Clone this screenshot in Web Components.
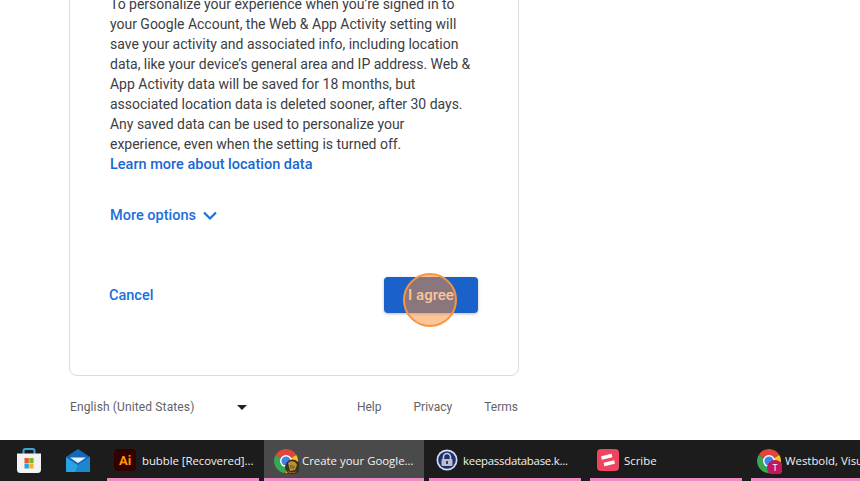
<!DOCTYPE html>
<html>
<head>
<meta charset="utf-8">
<title>Create your Google Account</title>
<style>
html, body { margin: 0; height: 481px; overflow: hidden; background: #fff; }
body { display: flex; flex-direction: column; font-family: Roboto, "Liberation Sans", sans-serif; }
</style>
</head>
<body>
<signup-page>
	<consent-card>
		<p-text>To personalize your experience when you’re signed in to your Google Account, the Web &amp; App Activity setting will save your activity and associated info, including location data, like your device’s general area and IP address. Web &amp; App Activity data will be saved for 18 months, but associated location data is deleted sooner, after 30 days. Any saved data can be used to personalize your experience, even when the setting is turned off.</p-text>
	</consent-card>
	<page-footer></page-footer>
</signup-page>
<task-bar>
	<task-icon kind="store"></task-icon>
	<task-icon kind="mail"></task-icon>
	<task-item kind="ai" label="bubble [Recovered]..."></task-item>
	<task-item kind="chrome" label="Create your Google..." active></task-item>
	<task-item kind="keepass" label="keepassdatabase.k..."></task-item>
	<task-item kind="scribe" label="Scribe"></task-item>
	<task-item kind="chrome2" label="Westbold, Visual Studio"></task-item>
</task-bar>

<script>
class PText extends HTMLElement {
	constructor() {
		super();
		this.attachShadow({ mode: "open" }).innerHTML = `<style>
:host { display: block; font: 14px/20px Roboto, sans-serif; color: #3c4043; letter-spacing: -.015px; }
</style><slot></slot>`;
	}
}
customElements.define("p-text", PText);

class ConsentCard extends HTMLElement {
	constructor() {
		super();
		this.attachShadow({ mode: "open" }).innerHTML = `<style>
:host { display: block; box-sizing: border-box; width: 450px; margin-left: 69px; padding: 40px 40px 62px 40px; border: 1px solid #dadce0; border-radius: 8px; flex: none; position: relative; }
.link { display: block; height: 20px; color: #1967d2; font: 500 14.5px/22px Roboto, sans-serif; }
.more { display: flex; align-items: center; gap: 6px; margin-top: 32px; height: 20px; color: #1a6fdc; font: 500 14.5px/20px Roboto, sans-serif; }
.more svg { display: block; }
.actions { display: flex; justify-content: space-between; align-items: center; margin-top: 51px; }
.cancel { color: #1a6fdc; font: 500 14.5px/20px Roboto, sans-serif; margin-left: -1px; padding-top: 1px; }
.agree { position: relative; width: 94px; height: 36px; background: #1a62c9; color: #fff; border-radius: 4px; box-shadow: 0 1px 3px rgba(60,64,67,.35); display: flex; align-items: center; justify-content: center; font: 500 15px Roboto, sans-serif; }
.ring { position: absolute; left: 19px; top: -4px; width: 50px; height: 50px; border: 2px solid #f9953f; border-radius: 50%; background: rgba(250,140,50,.5); }
</style>
<slot></slot>
<a class="link">Learn more about location data</a>
<div class="more">More options
	<svg width="16" height="10" viewBox="0 0 16 10"><path d="M2 1.500 L8 7.500 L14 1.500" fill="none" stroke="#1a6fdc" stroke-width="2.200"/></svg>
</div>
<div class="actions">
	<span class="cancel">Cancel</span>
	<div class="agree">I agree<div class="ring"></div></div>
</div>`;
	}
}
customElements.define("consent-card", ConsentCard);

class PageFooter extends HTMLElement {
	constructor() {
		super();
		this.attachShadow({ mode: "open" }).innerHTML = `<style>
:host { display: flex; align-items: center; box-sizing: border-box; width: 450px; height: 64px; padding: 0 1px 2px 0; margin-left: 69px; flex: none; font: 12px Roboto, sans-serif; color: #5f6368; }
.lang { display: flex; align-items: center; width: 177px; margin-left: 1px; justify-content: space-between; letter-spacing: .13px; }
.tri { width: 0; height: 0; border: 5px solid transparent; border-top: 5px solid #202124; border-bottom: 0; }
.links { display: flex; margin-left: auto; gap: 32px; }
</style>
<div class="lang"><span>English (United States)</span><span class="tri"></span></div>
<div class="links"><span>Help</span><span>Privacy</span><span>Terms</span></div>`;
	}
}
customElements.define("page-footer", PageFooter);

class SignupPage extends HTMLElement {
	constructor() {
		super();
		this.attachShadow({ mode: "open" }).innerHTML = `<style>
:host { display: flex; flex-direction: column; justify-content: flex-end; height: 440px; overflow: hidden; flex: none; }
</style><slot></slot>`;
	}
}
customElements.define("signup-page", SignupPage);

const chromeSvg = (extra) => `<svg width="26" height="28" viewBox="0 0 26 28">
<path d="M13 15 L2.610 9 A12 12 0 0 1 23.390 9Z" fill="#e0463a"/>
<path d="M13 15 L23.390 9 A12 12 0 0 1 13 27Z" fill="#f5c52c"/>
<path d="M13 15 L13 27 A12 12 0 0 1 2.610 9Z" fill="#3aa655"/>
<circle cx="13" cy="15" r="6" fill="#fff"/><circle cx="13" cy="15" r="4.600" fill="#3f84ee"/>${extra}</svg>`;

const icons = {
	store: `<svg width="24" height="25" viewBox="0 0 24 25">
<path d="M6.500 7V3a2 2 0 0 1 2-2h7a2 2 0 0 1 2 2v4" fill="none" stroke="#3ba5dc" stroke-width="2"/>
<path d="M0 5.500h24v16a3.500 3.500 0 0 1-3.500 3.500h-17a3.500 3.500 0 0 1-3.500-3.500z" fill="#f3f3f3"/>
<rect x="7.500" y="10" width="4.300" height="5" fill="#ea5a2c"/><rect x="12.300" y="10" width="4.300" height="5" fill="#7cb92a"/>
<rect x="7.500" y="15.500" width="4.300" height="5" fill="#2e9fe0"/><rect x="12.300" y="15.500" width="4.300" height="5" fill="#f5b51c"/></svg>`,
	mail: `<svg width="24" height="23" viewBox="0 0 24 23">
<path d="M0 8 12 0 24 8 12 16z" fill="#1369b8"/>
<path d="M4 8.500h16L12 14z" fill="#eaf3fa"/>
<path d="M0 8 12 16 24 8v14a1 1 0 0 1-1 1H1a1 1 0 0 1-1-1z" fill="#27a3e6"/>
<path d="M24 8v14a1 1 0 0 1-1 1H9l3-7z" fill="#1a87cf"/></svg>`,
	ai: `<svg width="22" height="22" viewBox="0 0 22 22"><rect width="22" height="22" rx="4" fill="#330000"/>
<text x="11" y="16" text-anchor="middle" font-family="Roboto, sans-serif" font-weight="700" font-size="13" fill="#ff9a00">Ai</text></svg>`,
	chrome: chromeSvg(`<circle cx="19.500" cy="21" r="7.500" fill="#3a3020"/><path d="M15 17c3-3 8-2 9 2l-2 5-5 1z" fill="#c98a2c"/><path d="M17 19l5 1-1 3-4-1z" fill="#6a7a30"/><path d="M14 24c3 3 8 3 10 0l-2 3h-6z" fill="#a85a24"/>`),
	chrome2: chromeSvg(`<circle cx="19" cy="22" r="8" fill="#c2185b"/><text x="19" y="25" text-anchor="middle" font-family="Roboto, sans-serif" font-size="8.500" fill="#fff">T</text>`),
	keepass: `<svg width="22" height="22" viewBox="0 0 22 22">
<circle cx="11" cy="11" r="10.500" fill="#d5dff3"/><circle cx="11" cy="11" r="8.800" fill="#1f2f70"/>
<path d="M7.500 10V8a3.500 3.500 0 0 1 7 0v2" fill="none" stroke="#c8cfdc" stroke-width="1.600"/>
<rect x="5.500" y="10" width="11" height="7" rx="1" fill="#b9bfcc"/><rect x="10" y="12" width="2" height="3" fill="#3a3f55"/></svg>`,
	scribe: `<svg width="22" height="22" viewBox="0 0 22 22"><rect width="22" height="22" rx="4" fill="#ee4660"/>
<path d="M4.500 9 15 6.500M7 15.500 17.500 13" stroke="#fff" stroke-width="3.400" fill="none"/></svg>`
};

class TaskIcon extends HTMLElement {
	connectedCallback() {
		this.attachShadow({ mode: "open" }).innerHTML = `<style>
:host { display: flex; align-items: center; justify-content: center; width: 49px; height: 41px; flex: none; }
svg { display: block; }
</style>${icons[this.getAttribute("kind")]}`;
	}
}
customElements.define("task-icon", TaskIcon);

class TaskItem extends HTMLElement {
	connectedCallback() {
		this.attachShadow({ mode: "open" }).innerHTML = `<style>
:host { display: flex; align-items: center; box-sizing: border-box; width: 152px; height: 41px; gap: 6px; padding: 2px 0 0 7px; border-bottom: 3px solid #f08ac4; color: #f2f2f2; font: 11.4px "Open Sans", "Noto Sans", sans-serif; white-space: nowrap; flex: none; }
:host([kind="ai"]) { letter-spacing: -.05px; }
:host([active]) { background: #4a4a4a; width: 160px; padding-left: 9px; gap: 3px; }
:host([kind="keepass"]) { gap: 5px; letter-spacing: -.25px; }
:host([kind="scribe"]) { gap: 5px; }
:host([kind="chrome2"]) { padding-left: 5px; gap: 3px; }
svg { display: block; flex: none; }
</style>${icons[this.getAttribute("kind")]}<span>${this.getAttribute("label")}</span>`;
	}
}
customElements.define("task-item", TaskItem);

class TaskBar extends HTMLElement {
	constructor() {
		super();
		this.attachShadow({ mode: "open" }).innerHTML = `<style>
:host { display: flex; gap: 5px; height: 41px; background: #1c1c1c; padding-left: 4px; flex: none; overflow: hidden; }
::slotted(task-icon) { margin-right: -5px; }
::slotted([kind="ai"]) { margin-left: 5px; }
::slotted([kind="scribe"]) { margin-left: 4px; margin-right: 4px; }
</style><slot></slot>`;
	}
}
customElements.define("task-bar", TaskBar);
</script>
</body>
</html>
